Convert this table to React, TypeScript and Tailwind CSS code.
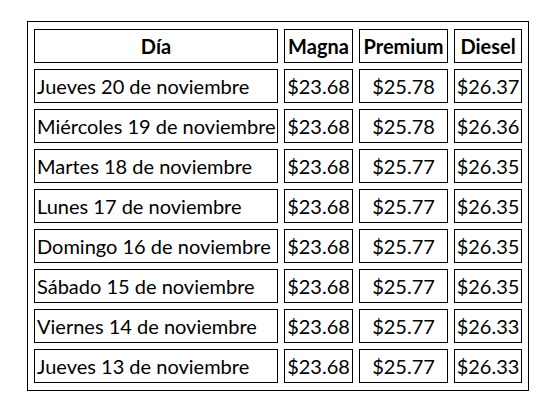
import { Fragment } from "react";

const rows: [string, string, string, string][] = [
  ["Jueves 20 de noviembre", "$23.68", "$25.78", "$26.37"],
  ["Miércoles 19 de noviembre", "$23.68", "$25.78", "$26.36"],
  ["Martes 18 de noviembre", "$23.68", "$25.77", "$26.35"],
  ["Lunes 17 de noviembre", "$23.68", "$25.77", "$26.35"],
  ["Domingo 16 de noviembre", "$23.68", "$25.77", "$26.35"],
  ["Sábado 15 de noviembre", "$23.68", "$25.77", "$26.35"],
  ["Viernes 14 de noviembre", "$23.68", "$25.77", "$26.33"],
  ["Jueves 13 de noviembre", "$23.68", "$25.77", "$26.33"],
];

const cell = "border border-black flex items-center h-[34px]";

export default function App() {
  return (
    <div className="w-[557px] h-[411px] bg-white pt-[21px] pl-[27px] font-['Lato',sans-serif] text-black">
      <div className="inline-grid grid-cols-[244px_69px_89px_68px] gap-x-[6px] gap-y-[6px] border border-black px-[6px] py-[7px] text-[20px] leading-none">
        <div className={`${cell} justify-center font-bold`}>Día</div>
        <div className={`${cell} justify-center font-bold`}>Magna</div>
        <div className={`${cell} justify-center font-bold`}>Premium</div>
        <div className={`${cell} justify-center font-bold`}>Diesel</div>
        {rows.map((r) => (
          <Fragment key={r[0]}>
            <div className={`${cell} pl-[2px] whitespace-nowrap`}>{r[0]}</div>
            <div className={`${cell} justify-center`}>{r[1]}</div>
            <div className={`${cell} justify-center`}>{r[2]}</div>
            <div className={`${cell} justify-center`}>{r[3]}</div>
          </Fragment>
        ))}
      </div>
    </div>
  );
}
